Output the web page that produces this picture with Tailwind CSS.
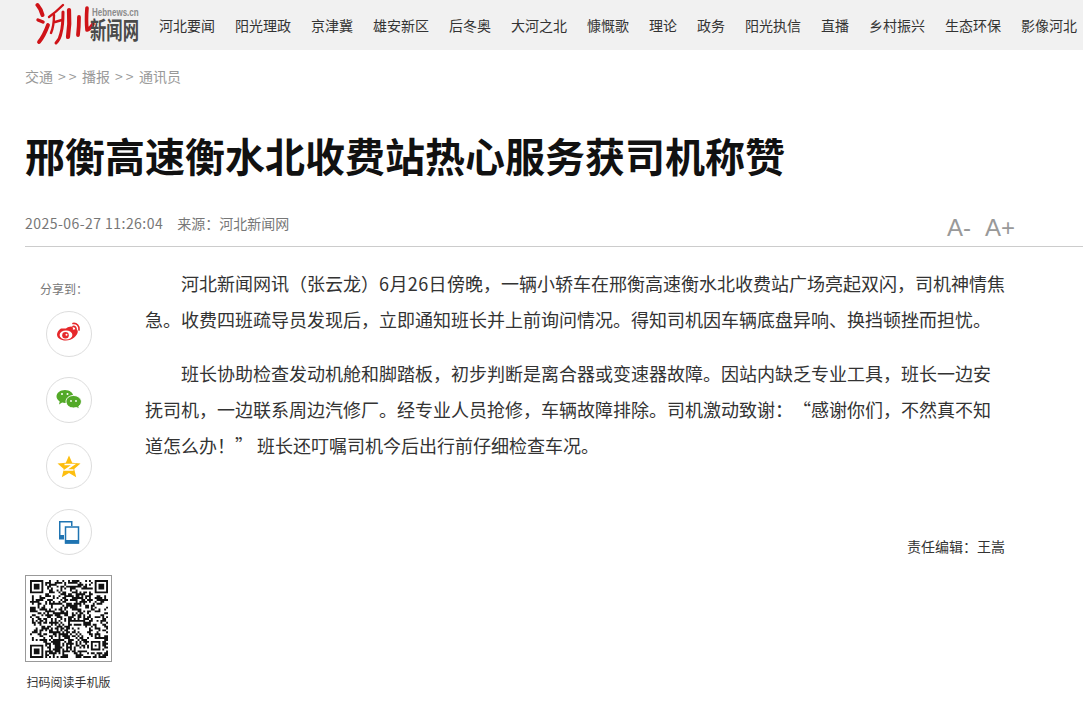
<!DOCTYPE html>
<html lang="zh-CN">
<head>
<meta charset="utf-8">
<title>邢衡高速衡水北收费站热心服务获司机称赞</title>
<script src="https://cdn.jsdelivr.net/npm/@tailwindcss/browser@4"></script>
</head>
<body class="bg-white text-[#333] font-['Noto_Sans_CJK_SC','Liberation_Sans',sans-serif] [text-spacing-trim:space-all] overflow-hidden w-[1083px] h-[715px]">
<header class="h-[50px] bg-[#f1f1f1] flex items-center pl-[35px] overflow-hidden">
  <a class="relative block w-[105px] h-[50px] shrink-0" href="#">
    <svg class="absolute left-0 top-0" width="60" height="50" viewBox="0 0 60 50" fill="none" stroke="#cf1318" stroke-linecap="round" stroke-linejoin="round">
      <path d="M2.500 5 Q6 9 7.500 15" stroke-width="4"/>
      <path d="M3 20 L8 22" stroke-width="3.400"/>
      <path d="M4 42 Q9 36 13 25" stroke-width="3.800"/>
      <path d="M14 17 Q21 12 28 5" stroke-width="2.400"/>
      <path d="M19 15 Q19 26 16 33 M20 22 L27 20" stroke-width="2.400"/>
      <path d="M28 12 Q28 26 26 33 Q25 39 21 43" stroke-width="3"/>
      <path d="M34 10 Q35 24 33 37" stroke-width="4.200"/>
      <path d="M44 17 Q44 27 43 35" stroke-width="3.800"/>
      <path d="M52 8 Q51 20 52 30 Q55 29 58 24" stroke-width="3.600"/>
    </svg>
    <span class="absolute left-[57px] top-[7px] origin-left scale-x-[0.8] text-[10px] leading-[11px] font-bold font-['Liberation_Sans'] text-[#8b8b8b] whitespace-nowrap">Hebnews.cn</span>
    <span class="absolute left-[55px] top-[15px] origin-left scale-x-[0.68] text-[24px] leading-[28px] font-bold text-[#4a4a4a] whitespace-nowrap">新闻网</span>
  </a>
  <nav class="flex ml-[19px] gap-5 text-sm leading-[50px] text-[#333] whitespace-nowrap">
    <a href="#">河北要闻</a><a href="#">阳光理政</a><a href="#">京津冀</a><a href="#">雄安新区</a><a href="#">后冬奥</a><a href="#">大河之北</a><a href="#">慷慨歌</a><a href="#">理论</a><a href="#">政务</a><a href="#">阳光执信</a><a href="#">直播</a><a href="#">乡村振兴</a><a href="#">生态环保</a><a href="#">影像河北</a>
  </nav>
</header>

<div class="flex gap-[5px] pl-[25px] pt-[16px] text-sm leading-5 text-[#999] whitespace-nowrap">
  <span>交通</span><span class="tracking-[3px] w-[19px]">&gt;&gt;</span><span>播报</span><span class="tracking-[3px] w-[19px]">&gt;&gt;</span><span>通讯员</span>
</div>

<h1 class="pl-[25px] mt-[39px] text-[40px] leading-[60px] font-bold text-[#111]">邢衡高速衡水北收费站热心服务获司机称赞</h1>

<div class="ml-[25px] mt-[21px] h-[41px] border-b border-[#ccc] flex justify-between pr-[68px] text-sm">
  <div class="text-[#777] leading-5 pt-[7px]"><span class="tracking-[0.46px]">2025-06-27 11:26:04</span><span class="ml-[14px]">来源<span class="font-['Noto_Sans_CJK_TC']">：</span>河北新闻网</span></div>
  <div class="flex gap-[14px] text-[24px] leading-[28px] pt-[8px] text-[#999] font-['Liberation_Sans']"><span>A-</span><span>A+</span></div>
</div>

<main class="flex pl-[25px] pt-[18px]">
  <aside class="w-[120px] shrink-0">
    <div class="ml-[15px] text-xs leading-5 pt-[14px] text-[#777]">分享到<span class="font-['Noto_Sans_CJK_TC']">：</span></div>
    <div class="w-[87px] flex flex-col items-center gap-5 mt-[12px]">
      <a class="w-[46px] h-[46px] rounded-full border border-[#ddd] flex items-center justify-center" href="#">
        <svg width="26" height="24" viewBox="0 0 26 24">
          <path fill="#e6282b" d="M10 6.500c3-2 6-2.600 6.800-1 .4 1-.1 2 .1 2.300 2.500-1 4.900-.7 4.900 1.800 0 4-5.600 9-12 9-5 0-8.800-2.500-8.800-6 0-2.100 1.600-4.600 4-6.100z"/>
          <ellipse cx="10" cy="13" rx="6.400" ry="4.500" fill="#fff"/>
          <circle cx="9.500" cy="13.300" r="3.300" fill="#e6282b"/>
          <circle cx="10.500" cy="12.700" r="1" fill="#fff"/>
          <path fill="none" stroke="#e6282b" stroke-width="1.700" stroke-linecap="round" d="M17 1.500c3.500-.6 6.800 2.500 6 6.500M17 4.500c1.800-.3 3.300 1.200 3 3"/>
        </svg>
      </a>
      <a class="w-[46px] h-[46px] rounded-full border border-[#ddd] flex items-center justify-center" href="#">
        <svg width="26" height="22" viewBox="0 0 26 22">
          <path fill="#53a928" d="M9 1c4.700 0 8.300 2.900 8.300 6.500S13.700 14 9 14c-1 0-2-.1-2.900-.4L3 15.500l.7-3.100C1.500 11 .5 9.300.5 7.500.5 3.900 4.300 1 9 1z"/>
          <path fill="#53a928" stroke="#fff" d="M17.500 6.500c4.300 0 7.900 2.800 7.900 6.300 0 1.800-1 3.400-2.600 4.500l.5 2.700-2.800-1.500c-.9.300-1.900.5-3 .5-4.300 0-7.500-2.900-7.500-6.400s3.200-6.100 7.500-6.100z"/>
          <g fill="#fff"><circle cx="6" cy="5" r="1"/><circle cx="11.500" cy="5" r="1"/><circle cx="15" cy="12" r=".9"/><circle cx="20" cy="12" r=".9"/></g>
        </svg>
      </a>
      <a class="w-[46px] h-[46px] rounded-full border border-[#ddd] flex items-center justify-center" href="#">
        <svg width="24" height="23" viewBox="0 0 24 23">
          <path fill="#fdbe0f" d="M12 .5l3.200 7.300 8.300.7-6.300 5.400 2 8.300-7.200-4.200-7.200 4.200 2-8.300L.5 8.500l8.300-.7z"/>
          <path fill="none" stroke="#fff" stroke-width="1.700" d="M7.500 9.500h9l-8 5.500h8"/>
        </svg>
      </a>
      <a class="w-[46px] h-[46px] rounded-full border border-[#ddd] flex items-center justify-center" href="#">
        <svg width="22" height="24" viewBox="0 0 22 24">
          <path fill="#1f74b2" d="M1 1h13.500v5H13V2.500H2.500v13H6V19H1z"/>
          <rect x="1" y="15" width="5" height="4.500" fill="#1f74b2"/>
          <rect x="7.500" y="7" width="13" height="16" fill="#fff" stroke="#1f74b2" stroke-width="1.500"/>
          <rect x="7" y="20" width="14" height="3.500" fill="#1f74b2"/>
        </svg>
      </a>
    </div>
    <div class="mt-[20px] w-[87px] h-[87px] border border-[#999] flex items-center justify-center">
      <svg id="qr" width="78" height="78" viewBox="0 0 41 41" fill="#111"></svg>
    </div>
    <div class="w-[87px] text-center text-[12px] leading-5 mt-[10px] whitespace-nowrap text-[#333]">扫码阅读手机版</div>
  </aside>
  <article class="w-[860px] text-[18px] leading-9 text-[#333]">
    <p class="indent-9 mb-[18px]">河北新闻网讯（张云龙）<span class="tracking-[0.4px]">6月26日</span>傍晚，一辆小轿车在邢衡高速衡水北收费站广场亮起双闪，司机神情焦急。收费四班疏导员发现后，立即通知班长并上前询问情况。得知司机因车辆底盘异响、换挡顿挫而担忧。</p>
    <p class="indent-9">班长协助检查发动机舱和脚踏板，初步判断是离合器或变速器故障。因站内缺乏专业工具，班长一边安抚司机，一边联系周边汽修厂。经专业人员抢修，车辆故障排除。司机激动致谢<span class="font-['Noto_Sans_CJK_TC']">：</span>“感谢你们，不然真不知道怎么办<span class="font-['Noto_Sans_CJK_TC']">！</span>” 班长还叮嘱司机今后出行前仔细检查车况。</p>
    <div class="mt-[73px] text-right text-sm leading-5">责任编辑<span class="font-['Noto_Sans_CJK_TC']">：</span>王嵩</div>
  </article>
</main>
<script>
(function () {
  var n = 41, s = 20250627, d = '';
  function finder(x, y) { return 'M' + x + ' ' + y + 'h7v7h-7zM' + (x + 1) + ' ' + (y + 1) + 'v5h5v-5zM' + (x + 2) + ' ' + (y + 2) + 'h3v3h-3z'; }
  d += finder(0, 0) + finder(34, 0) + finder(0, 34) + 'M32 32h5v5h-5zM33 33v3h3v-3zM34 34h1v1h-1z';
  for (var y = 0; y < n; y++) for (var x = 0; x < n; x++) {
    if ((x < 8 && y < 8) || (x > 32 && y < 8) || (x < 8 && y > 32) || (x > 30 && x < 38 && y > 30 && y < 38)) continue;
    s = (s * 1103515245 + 12345) & 0x7fffffff;
    if ((s >> 16) % 100 < 50) d += 'M' + x + ' ' + y + 'h1v1h-1z';
  }
  var p = document.createElementNS('http://www.w3.org/2000/svg', 'path');
  p.setAttribute('d', d); p.setAttribute('fill-rule', 'evenodd');
  document.getElementById('qr').appendChild(p);
})();
</script>
</body>
</html>
